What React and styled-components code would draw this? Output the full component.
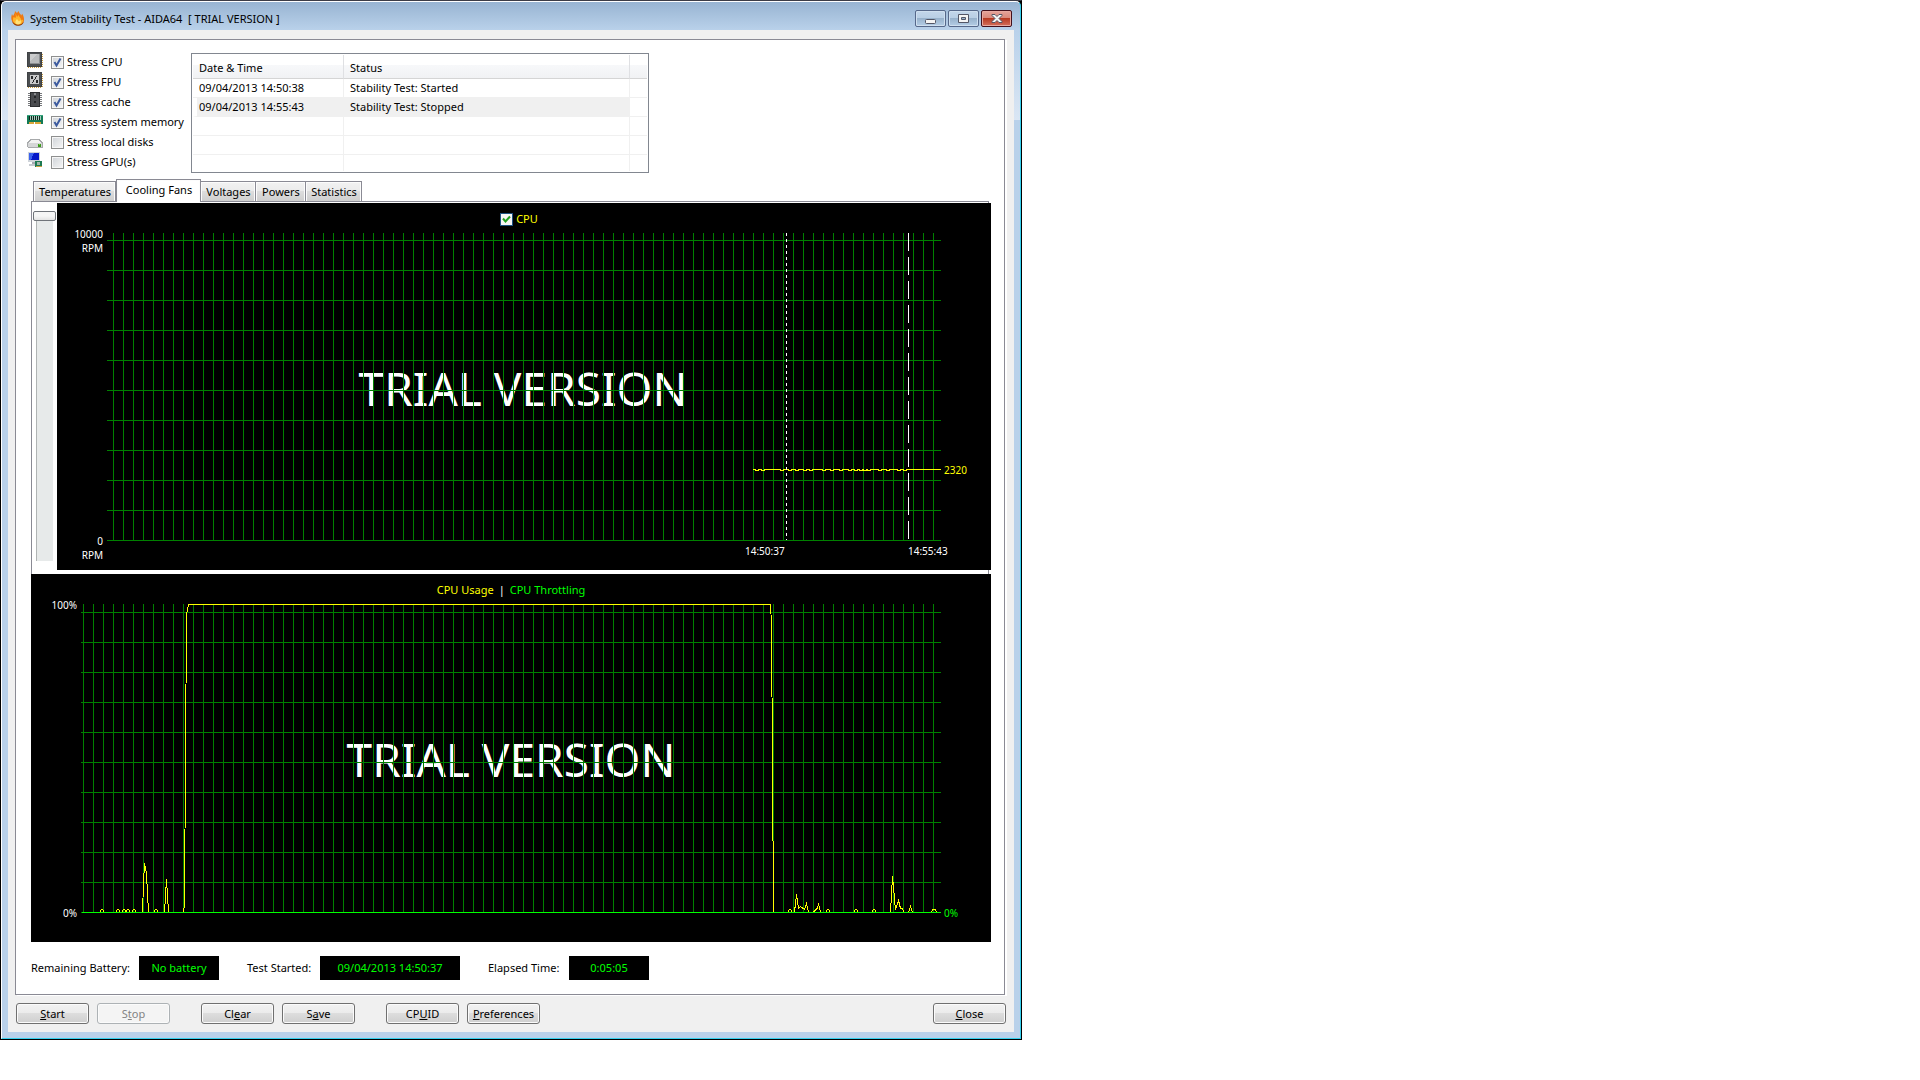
import React, { useState } from "react";
import styled, { createGlobalStyle, css } from "styled-components";

const GlobalStyle = createGlobalStyle`
  *, *::before, *::after { box-sizing: border-box; }
  body {
    margin: 0;
    background: #fff;
    color: #000;
    font: 11px/16px "Noto Sans", "Open Sans", sans-serif;
  }
  button, input, output, table { font: inherit; color: inherit; }
`;

/* ---------- window frame ---------- */

const Shell = styled.main`
  width: 100%;
  max-width: 1022px;
  background: #000;
  border: 1px solid #000;
  border-top-color: #3c3c46;
`;

const Frame = styled.div`
  border: 1px solid #fff;
  border-right-color: #35d0ee;
  border-bottom-color: #35d0ee;
  border-radius: 5px 5px 0 0;
  padding: 0 6px 6px;
  background:
    linear-gradient(#98b4d2, #b9d1ea) 0 0 / 100% 28px no-repeat,
    linear-gradient(#b9d1ea, #dae6f4) 0 28px / 100% 90px no-repeat,
    #b9d1ea;
`;

const TitleBar = styled.header`
  display: flex;
  align-items: center;
  height: 28px;
  padding: 0 2px 0 3px;
`;

const Title = styled.h1`
  flex: 1;
  margin: 0 0 0 4px;
  padding-top: 6px;
  font-size: 11px;
  line-height: 16px;
  font-weight: 400;
  white-space: pre;
`;

const FlameSvg = styled.svg`
  margin-top: 4px;
`;

const CaptionButtons = styled.div`
  display: flex;
  gap: 2px;
  padding-top: 5px;
`;

const CaptionButton = styled.button`
  width: 31px;
  height: 17px;
  padding: 0;
  display: grid;
  place-items: center;
  border: 1px solid ${(p) => (p.$danger ? "#43101c" : "#56688a")};
  border-radius: 2px;
  box-shadow: inset 0 0 0 1px ${(p) => (p.$danger ? "#e8a9a0" : "#cfdfef")};
  background: ${(p) =>
    p.$danger
      ? "linear-gradient(#e5a49b 0, #d98678 50%, #b83a22 50%, #d4705c 100%)"
      : "linear-gradient(#c3d6ea 0, #b8cee4 50%, #98b2cc 50%, #b4cde6 100%)"};
`;

const Client = styled.div`
  padding: 9px 8px 8px 7px;
  background: #f0f0f0;
`;

const Panel = styled.section`
  margin-right: 1px;
  border: 1px solid #8a8a94;
  box-shadow: 2px 1px 0 #fff;
  background: #fff;
`;

/* ---------- stress options and log ---------- */

const TopArea = styled.div`
  display: flex;
  padding: 12px 11px 6px;
`;

const StressList = styled.ul`
  width: 164px;
  margin: 0;
  padding: 0;
  list-style: none;
`;

const StressItem = styled.li`
  display: flex;
  gap: 8px;
  height: 20px;
`;

const IconSvg = styled.svg`
  flex: none;
  shape-rendering: crispEdges;
`;

const CheckLabel = styled.label`
  display: flex;
  align-items: center;
  gap: 3px;
  white-space: nowrap;
  color: ${(p) => p.$color || "#000"};
`;

const CheckCell = styled.span`
  display: grid;
  width: 13px;
  height: 13px;
  > * { grid-area: 1 / 1; }
  > svg { pointer-events: none; }
`;

const CheckInput = styled.input`
  appearance: none;
  width: 13px;
  height: 13px;
  margin: 0;
  border: 1px solid ${(p) => (p.$legend ? "#1c5180" : "#8e8f8f")};
  box-shadow: inset 0 0 0 1px #f6f6f6;
  background: ${(p) => (p.$legend ? "#f6f6f4" : "linear-gradient(135deg, #cfd3d8, #f6f6f6)")};
`;

const LogBox = styled.div`
  width: 458px;
  height: 120px;
  margin-top: 1px;
  padding: 1px;
  border: 1px solid #828790;
`;

const LogTable = styled.table`
  width: 100%;
  border-collapse: separate;
  border-spacing: 0;
  table-layout: fixed;
`;

const HeadCell = styled.th`
  width: ${(p) => p.$width || "auto"};
  height: 24px;
  padding: 2px 6px 0;
  text-align: left;
  font-weight: 400;
  border-right: ${(p) => (p.$last ? 0 : "1px solid #dfe0e3")};
  border-bottom: 1px solid #d5d5d5;
  background: linear-gradient(#fff 0, #fff 42%, #f7f8fa 42%, #f1f2f4 100%);
`;

const Cell = styled.td`
  height: ${(p) => (p.$end ? 16 : 19)}px;
  padding: 0 6px;
  line-height: ${(p) => (p.$end ? 16 : 18)}px;
  border-bottom: ${(p) => (p.$end ? 0 : "1px solid #f0f0f0")};
  border-right: ${(p) => (p.$last ? 0 : "1px solid #f0f0f0")};
  background: ${(p) => (p.$selected ? "#f0f0f0" : "#fff")};
  ${(p) => p.$selected && p.$first && css`border-left: 4px solid #fff; padding-left: 2px;`}
`;

/* ---------- tabs ---------- */

const Tabs = styled.div`
  display: flex;
  align-items: flex-end;
  height: 22px;
  padding-left: 17px;
`;

const Tab = styled.button`
  width: ${(p) => p.$width}px;
  height: 20px;
  padding: 0 0 0 1px;
  text-align: center;
  white-space: nowrap;
  border: 1px solid #8a8a94;
  border-bottom: 0;
  border-left-width: ${(p) => (p.$joined ? 0 : 1)}px;
  box-shadow: inset 1px 1px 0 #fcfcfc, inset -1px 0 0 #fcfcfc;
  background: linear-gradient(#f2f2f2 0, #ebebeb 50%, #dddddd 50%, #cfcfcf 100%);
  ${(p) =>
    p.$active &&
    css`
      position: relative;
      height: 23px;
      margin-bottom: -1px;
      padding-bottom: 3px;
      background: #fff;
    `}
`;

const Charts = styled.div`
  padding: 0 13px 0 15px;
`;

const TabPage = styled.div`
  display: flex;
  margin-right: 2px;
  padding: 1px 0 4px 1px;
  border: 1px solid #8a8a94;
  border-bottom: 0;
`;

const SliderCell = styled.div`
  flex: none;
  width: 24px;
  padding-top: 8px;
`;

const Slider = styled.input`
  appearance: none;
  writing-mode: vertical-lr;
  display: block;
  width: 23px;
  height: 350px;
  margin: 0;
  background: linear-gradient(90deg, #b0b4b4 1px, #e7eaea 1px) 3px 0 / 17px 100% no-repeat;
  &::-webkit-slider-runnable-track { width: 23px; height: 100%; }
  &::-webkit-slider-thumb {
    appearance: none;
    width: 23px;
    height: 10px;
    border: 1px solid #70747a;
    border-radius: 2px;
    background: linear-gradient(#f6f6f6 50%, #e4e4e4 100%);
  }
`;

/* ---------- charts ---------- */

const ChartBox = styled.figure`
  flex: 1;
  min-width: 0;
  margin: 0 ${(p) => (p.$bleed ? -3 : 0)}px 0 0;
  background: #000;
`;

const Legend = styled.figcaption`
  display: flex;
  justify-content: center;
  align-items: center;
  gap: 5px;
  height: 30px;
  padding: ${(p) => p.$pad};
  color: #fff;
`;

const LegendText = styled.span`
  color: ${(p) => p.$color};
`;

const ChartSvg = styled.svg`
  display: block;
  width: 100%;
  height: auto;
  overflow: visible;
  font-family: "Noto Sans", "Open Sans", sans-serif;
  font-size: 10px;
  fill: #fff;
`;

/* ---------- status and buttons ---------- */

const StatusRow = styled.div`
  display: flex;
  gap: 28px;
  padding: 14px 15px;
`;

const StatusItem = styled.div`
  display: flex;
  align-items: center;
`;

const StatusLabel = styled.label`
  width: ${(p) => p.$width}px;
  white-space: nowrap;
`;

const Readout = styled.output`
  width: ${(p) => p.$width}px;
  height: 24px;
  line-height: 24px;
  text-align: center;
  background: #000;
  color: #00ff00;
`;

const Toolbar = styled.footer`
  display: flex;
  gap: 8px;
  padding: 8px 0 0 1px;
`;

const PushButton = styled.button`
  width: 73px;
  height: 21px;
  padding: 0;
  line-height: 18px;
  margin-left: ${(p) => (p.$push ? "auto" : p.$group ? "23px" : 0)};
  border: 1px solid #707070;
  border-radius: 3px;
  box-shadow: inset 0 0 0 1px #fbfbfb;
  background: linear-gradient(#f2f2f2 0, #ebebeb 50%, #dddddd 50%, #cfcfcf 100%);
  &:disabled {
    color: #838383;
    border-color: #adb2b5;
    background: #f4f4f4;
  }
`;

/* ---------- icons ---------- */

function Icon({ children }) {
  return (
    <IconSvg width="16" height="16" viewBox="0 0 16 16" aria-hidden="true">
      {children}
    </IconSvg>
  );
}

const chipPins = [1, 3, 5, 7, 9, 11, 13];

function ChipBase({ children }) {
  return (
    <Icon>
      {chipPins.map((n) => (
        <React.Fragment key={n}>
          <rect x={n} y="14" width="1" height="2" fill="#c89a3c" />
          <rect x="14" y={n + 1} width="2" height="1" fill="#c89a3c" />
        </React.Fragment>
      ))}
      <rect width="15" height="15" fill="#3f4245" />
      <rect x="1" y="1" width="13" height="13" fill="#4b4e51" />
      {children}
    </Icon>
  );
}

const CpuIcon = () => (
  <ChipBase>
    <rect x="3" y="2" width="10" height="10" fill="#8c8f92" />
    <rect x="3" y="2" width="9" height="9" fill="#b9bbbd" />
    <path d="M3 2h7L3 9z" fill="#cbcccd" />
  </ChipBase>
);

const FpuIcon = () => (
  <ChipBase>
    <rect x="3" y="3" width="9" height="9" fill="#c9cacb" />
    <path d="M4 4h2v3H4zM9 8h2v3H9zM9 4h1v1H9zM8 5h1v2H8zM7 7h1v1H7zM6 8h1v2H6zM5 10h1v1H5z" fill="#26282a" />
  </ChipBase>
);

const CacheIcon = () => (
  <Icon>
    {[1, 3, 5, 7, 9, 11, 13].map((y) => (
      <rect key={y} x="1" y={y} width="14" height="1" fill="#77797c" />
    ))}
    <rect x="3" y="0" width="10" height="15" fill="#2c2e30" />
    <rect x="4" y="1" width="8" height="13" fill="#4a4c4f" />
    <rect x="7" y="1" width="2" height="2" fill="#8b8d90" />
    <rect x="7" y="4" width="2" height="2" fill="#232527" />
    <rect x="7" y="9" width="2" height="2" fill="#232527" />
  </Icon>
);

const MemoryIcon = () => (
  <Icon>
    <rect y="3" width="16" height="9" fill="#127a55" />
    <rect y="3" width="16" height="1" fill="#3aa57f" />
    {[2, 4, 6, 8, 10, 12].map((x) => (
      <rect key={x} x={x} y="4" width="1" height="4" fill="#10261d" />
    ))}
    {[3, 5, 7, 9, 11, 13].map((x) => (
      <rect key={x} x={x} y="4" width="1" height="4" fill="#a7cdbd" />
    ))}
    <rect x="2" y="10" width="12" height="2" fill="#d9a53a" />
    <rect x="7" y="10" width="1" height="2" fill="#fff" />
  </Icon>
);

const DiskIcon = () => (
  <Icon>
    <path d="M3 7h10l3 4v4l-1 1H1l-1-1v-4z" fill="#a7a9ab" />
    <path d="M4 8h8l2 3H2z" fill="#f2f2f2" />
    <rect x="1" y="11" width="14" height="4" fill="#d5d6d7" />
    <rect x="11" y="12" width="3" height="3" fill="#3d9a1c" />
    <rect x="12" y="12" width="1" height="1" fill="#7ee04f" />
  </Icon>
);

const GpuIcon = () => (
  <Icon>
    <rect x="1" y="0" width="12" height="10" fill="#cfd4da" />
    <rect x="2" y="1" width="10" height="7" fill="#0418c8" />
    <path d="M2 1h5l-3 7H2z" fill="#3b62ee" />
    <path d="M5 10h4v2H5z" fill="#a5abb2" />
    <path d="M2 12h8v2H2z" fill="#c6cad0" />
    <rect x="8" y="9" width="7" height="6" fill="#1d7a52" />
    <rect x="10" y="10" width="3" height="3" fill="#9fb6aa" />
    <rect x="9" y="14" width="6" height="1" fill="#c9a040" />
  </Icon>
);

const Flame = () => (
  <FlameSvg width="15" height="16" viewBox="0 0 15 16" aria-hidden="true">
    <path d="M4 1c0 2-1 3-2 5L1 4C0 7 0 9 1 11c1 3 3 4.500 6 4.500 4 0 6-2.500 6-6 0-2-.5-4-2-6l-.5 2C9.500 4 8 3 7.500 1L6 3z" fill="#f07a10" />
    <path d="M4.500 3c0 2 1 3 0 5l-2-1C1 11 3 15 7 15c4 0 5-3 5-5.500l-1.500 1C10 8 8 7 7.500 5L6 7z" fill="#ffb62a" />
    <path d="M6 9c-2 1.500-2.500 5 1 5.500 3 0 3.500-2.500 2.500-4.500L8 11.500z" fill="#ffe27a" />
    <path d="M1 11c1 3 3 4.800 6 4.800s5-1.500 5.800-4c-2 2.400-3.800 3-5.800 3s-4-1.200-6-3.800z" fill="#8c3a08" />
  </FlameSvg>
);

/* ---------- controls ---------- */

function Check({ label, initial, legend, color }) {
  const [on, setOn] = useState(initial);
  return (
    <CheckLabel $color={color}>
      <CheckCell>
        <CheckInput type="checkbox" $legend={legend} checked={on} onChange={() => setOn(!on)} />
        {on && (
          <svg width="13" height="13" viewBox="0 0 13 13" aria-hidden="true">
            <path
              d={legend ? "M3 5.500L5.500 8.500L10 3.500" : "M3.500 6L5.500 9.500L9.500 2.500"}
              fill="none"
              stroke={legend ? "#21a121" : "#3c5a9e"}
              strokeWidth="2"
            />
          </svg>
        )}
      </CheckCell>
      {label}
    </CheckLabel>
  );
}

const stressOptions = [
  ["Stress CPU", CpuIcon, true],
  ["Stress FPU", FpuIcon, true],
  ["Stress cache", CacheIcon, true],
  ["Stress system memory", MemoryIcon, true],
  ["Stress local disks", DiskIcon, false],
  ["Stress GPU(s)", GpuIcon, false],
];

const logRows = [
  ["09/04/2013 14:50:38", "Stability Test: Started"],
  ["09/04/2013 14:55:43", "Stability Test: Stopped"],
  ["", ""],
  ["", ""],
  ["", ""],
];

const tabs = [
  ["Temperatures", 83],
  ["Cooling Fans", 85],
  ["Voltages", 55],
  ["Powers", 50],
  ["Statistics", 56],
];

const range = (from, to, step) => {
  const out = [];
  for (let v = from; v <= to; v += step) out.push(v);
  return out;
};

function Grid({ left, first, right, top, bottom }) {
  const d =
    range(first, right, 10).map((x) => `M${x + 0.5} ${top}V${bottom}`).join("") +
    range(bottom - 300, bottom, 30).map((y) => `M${left} ${y + 0.5}H${right}`).join("");
  return <path d={d} stroke="#008000" fill="none" shapeRendering="crispEdges" />;
}

/* x of each one-pixel dip in the fan speed */
const fanDips = [699, 705, 724, 732, 739, 747, 753, 766, 774, 783, 792, 798, 803, 807, 811, 822, 830, 841, 847];

const fanTrace =
  "696,236.500 " +
  fanDips.map((x) => `${x - 1},236.500 ${x},237.500 ${x + 2},237.500 ${x + 3},236.500`).join(" ") +
  " 884,236.500";

function FanChart() {
  return (
    <ChartBox $bleed>
      <Legend $pad="2px 10px 0 0">
        <Check label="CPU" initial legend color="#ffff00" />
      </Legend>
      <ChartSvg viewBox="0 0 934 337" role="img" aria-label="Cooling fan speed">
        <text x="466" y="173" textAnchor="middle" fontSize="46">TRIAL VERSION</text>
        <Grid left={50} first={56} right={884} top={0} bottom={307} />
        <polyline points={fanTrace} fill="none" stroke="#ffff00" shapeRendering="crispEdges" />
        <path d="M729.500 0V307" stroke="#fff" strokeDasharray="3 3" shapeRendering="crispEdges" />
        <path d="M851.500 0V307" stroke="#fff" strokeDasharray="18 6" shapeRendering="crispEdges" />
        <g textAnchor="end">
          <text x="46" y="5">10000</text>
          <text x="46" y="19">RPM</text>
          <text x="46" y="312">0</text>
          <text x="46" y="326">RPM</text>
        </g>
        <text x="688" y="322">14:50:37</text>
        <text x="851" y="322">14:55:43</text>
        <text x="887" y="241" fill="#ffff00">2320</text>
      </ChartSvg>
    </ChartBox>
  );
}

/* x of the small idle blips above the base line */
const blips = [71, 87, 93, 97, 103, 125, 759, 797, 825, 843];

const usageTrace =
  blips.map((x) => `M${x - 1.5} 308V306.500L${x - 0.5} 305.500H${x + 0.5}L${x + 1.5} 306.500V308`).join("") +
  "M111.500 308L112.500 280L113.500 259.500L115.500 270L117.500 308" +
  "M133.500 308L135.500 275.500L137.500 308" +
  "M152.500 308L153.500 300L155.500 10L157.500 .5H739.500L740.500 20L742.500 308" +
  "M763.500 308L765.500 290.500L767.500 304L769.500 302.500L773.500 305.500L775.500 299.500L777.500 308" +
  "M782.500 308L786.500 304L787.500 299.500L789.500 308" +
  "M859.500 308L861.500 272.500L864.500 306L867.500 296.500L869.500 304.500H871.500L872.500 308" +
  "M877.500 308L879.500 302.500L881.500 308" +
  "M900.500 308L901.500 305.500H904.500L905.500 308";

function UsageChart() {
  return (
    <ChartBox>
      <Legend $pad="2px 0 0">
        <LegendText $color="#ffff00">CPU Usage</LegendText>
        <span>|</span>
        <LegendText $color="#00ff00">CPU Throttling</LegendText>
      </Legend>
      <ChartSvg viewBox="0 0 960 338" role="img" aria-label="CPU usage and throttling">
        <text x="480" y="173" textAnchor="middle" fontSize="46">TRIAL VERSION</text>
        <Grid left={50} first={52} right={910} top={0} bottom={308} />
        <path d={usageTrace} fill="none" stroke="#ffff00" shapeRendering="crispEdges" />
        <path d="M51 308.500H910" stroke="#00ff00" shapeRendering="crispEdges" />
        <g textAnchor="end">
          <text x="46" y="5">100%</text>
          <text x="46" y="313">0%</text>
        </g>
        <text x="913" y="313" fill="#00ff00">0%</text>
      </ChartSvg>
    </ChartBox>
  );
}

export default function App() {
  const [active, setActive] = useState("Cooling Fans");
  return (
    <>
      <GlobalStyle />
      <Shell>
        <Frame>
          <TitleBar>
            <Flame />
            <Title>{"System Stability Test - AIDA64  [ TRIAL VERSION ]"}</Title>
            <CaptionButtons>
              <CaptionButton aria-label="Minimize">
                <svg width="11" height="13" viewBox="0 0 11 13">
                  <rect x=".5" y="7.500" width="10" height="4" rx="1" fill="#f4f4f4" stroke="#535666" />
                </svg>
              </CaptionButton>
              <CaptionButton aria-label="Maximize">
                <svg width="11" height="11" viewBox="0 0 11 11">
                  <path d="M.5 1.500h10v8H.5zM3.500 4.500v2h4v-2z" fill="#f4f4f4" fillRule="evenodd" stroke="#535666" />
                </svg>
              </CaptionButton>
              <CaptionButton $danger aria-label="Close window">
                <svg width="12" height="11" viewBox="0 0 12 11">
                  <path d="M1 1.500h3l2 2 2-2h3v1l-3 3 3 3v1H8l-2-2-2 2H1v-1l3-3-3-3z" fill="#f4f4f4" stroke="#535666" />
                </svg>
              </CaptionButton>
            </CaptionButtons>
          </TitleBar>
          <Client>
            <Panel>
              <TopArea>
                <StressList>
                  {stressOptions.map(([label, StressIcon, on]) => (
                    <StressItem key={label}>
                      <StressIcon />
                      <Check label={label} initial={on} />
                    </StressItem>
                  ))}
                </StressList>
                <LogBox>
                  <LogTable>
                    <thead>
                      <tr>
                        <HeadCell $width="151px">Date &amp; Time</HeadCell>
                        <HeadCell $width="286px">Status</HeadCell>
                        <HeadCell $last aria-hidden="true" />
                      </tr>
                    </thead>
                    <tbody>
                      {logRows.map(([time, status], i) => (
                        <tr key={i}>
                          <Cell $first $selected={i === 1} $end={i === 4}>{time}</Cell>
                          <Cell $selected={i === 1} $end={i === 4}>{status}</Cell>
                          <Cell $last $end={i === 4} />
                        </tr>
                      ))}
                    </tbody>
                  </LogTable>
                </LogBox>
              </TopArea>
              <Tabs role="tablist">
                {tabs.map(([name, width], i) => (
                  <Tab
                    key={name}
                    role="tab"
                    aria-selected={name === active}
                    $active={name === active}
                    $joined={name !== active && i > 0}
                    $width={width}
                    onClick={() => setActive(name)}
                  >
                    {name}
                  </Tab>
                ))}
              </Tabs>
              <Charts>
                <TabPage role="tabpanel">
                  <SliderCell>
                    <Slider type="range" min="0" max="100" defaultValue="0" aria-label="Time scale" />
                  </SliderCell>
                  <FanChart />
                </TabPage>
                <UsageChart />
              </Charts>
              <StatusRow>
                <StatusItem>
                  <StatusLabel htmlFor="battery" $width={108}>Remaining Battery:</StatusLabel>
                  <Readout id="battery" $width={80}>No battery</Readout>
                </StatusItem>
                <StatusItem>
                  <StatusLabel htmlFor="started" $width={73}>Test Started:</StatusLabel>
                  <Readout id="started" $width={140}>09/04/2013 14:50:37</Readout>
                </StatusItem>
                <StatusItem>
                  <StatusLabel htmlFor="elapsed" $width={81}>Elapsed Time:</StatusLabel>
                  <Readout id="elapsed" $width={80}>0:05:05</Readout>
                </StatusItem>
              </StatusRow>
            </Panel>
            <Toolbar>
              <PushButton><u>S</u>tart</PushButton>
              <PushButton disabled>S<u>t</u>op</PushButton>
              <PushButton $group>Cl<u>e</u>ar</PushButton>
              <PushButton>S<u>a</u>ve</PushButton>
              <PushButton $group>CP<u>U</u>ID</PushButton>
              <PushButton><u>P</u>references</PushButton>
              <PushButton $push><u>C</u>lose</PushButton>
            </Toolbar>
          </Client>
        </Frame>
      </Shell>
    </>
  );
}
